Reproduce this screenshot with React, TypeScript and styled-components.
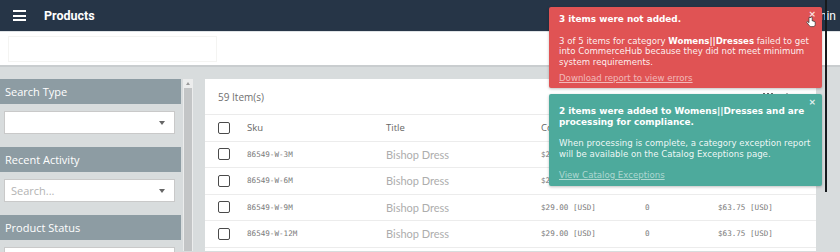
import React from "react";
import styled, { createGlobalStyle, css } from "styled-components";

const Global = createGlobalStyle`
  html, body { margin: 0; padding: 0; }
  body {
    width: 840px; height: 252px; overflow: hidden;
    background: #d8dcdd;
    font-family: "Open Sans", "Liberation Sans", sans-serif;
  }
  * { box-sizing: border-box; }
`;

const Page = styled.div`
  position: relative;
  width: 840px;
  height: 252px;
  overflow: hidden;
  background: #d8dcdd;
`;

const TopBar = styled.header`
  height: 31px;
  background: #263547;
  display: flex;
  align-items: center;
  padding: 0 4px 0 13px;
  border-bottom: 1px solid #dfe3e6;
  box-sizing: content-box;
`;

const Burger = styled.div`
  width: 13px;
  display: flex;
  flex-direction: column;
  gap: 2.5px;
  span { display: block; height: 2px; background: #fff; }
`;

const AppTitle = styled.h1`
  margin: 0 0 0 18px;
  font-family: Roboto, "Liberation Sans", sans-serif;
  font-weight: 700;
  font-size: 12.5px;
  color: #fff;
  flex: 1;
`;

const UserName = styled.span`
  font-family: Roboto, "Liberation Sans", sans-serif;
  font-size: 12px;
  color: #fff;
`;

const SubBar = styled.div`
  height: 35px;
  background: #fff;
  padding: 4px 8px;
  border-bottom: 2px solid #c9cdcf;
`;

const FilterBox = styled.div`
  width: 209px;
  height: 26px;
  border: 1px solid #f4f4f2;
`;

const Content = styled.div`
  display: grid;
  grid-template-columns: 181px 10px 621px;
  column-gap: 2px;
  padding-top: 12px;
  & > :nth-child(3) { margin-left: 10px; }
`;

const Sidebar = styled.aside`
  display: flex;
  flex-direction: column;
`;

const SectionHead = styled.div`
  height: 25px;
  background: #8d9ca3;
  color: #fff;
  font-family: "Open Sans", sans-serif;
  font-size: 11px;
  line-height: 25px;
  padding-left: 5px;
`;

const SelectBox = styled.div`
  height: 23px;
  margin: 7px 6px 13px 4px;
  background: #fff;
  border: 1px solid #c9c9c9;
  display: flex;
  align-items: center;
  padding: 0 9px 0 6px;
  font-family: "Open Sans", sans-serif;
  font-size: 11px;
  color: #b3b3b3;
  span { flex: 1; }
  &::after {
    content: "";
    border-left: 3px solid transparent;
    border-right: 3px solid transparent;
    border-top: 4px solid #666;
  }
`;

const ScrollTrack = styled.div`
  height: 172px;
  background: #eceded;
  display: flex;
  flex-direction: column;
  align-items: center;
`;

const ScrollArrow = styled.div`
  height: 9px;
  display: flex;
  align-items: center;
  &::before {
    content: "";
    border-left: 2.5px solid transparent;
    border-right: 2.5px solid transparent;
    border-bottom: 3px solid #9a9a9a;
  }
`;

const ScrollThumb = styled.div`
  width: 8px;
  flex: 1;
  background: #c3c5c6;
`;

const Card = styled.main`
  background: #fff;
  height: 172px;
`;

const CardTop = styled.div`
  height: 36px;
  display: flex;
  align-items: center;
  padding: 0 13px;
  border-bottom: 1px solid #ebebeb;
  font-family: "Open Sans", sans-serif;
  font-size: 10px;
  color: #707070;
  span { flex: 1; }
`;

const ToolIcons = styled.div`
  display: flex;
  gap: 12px;
  margin-right: 14px;
  align-items: flex-start;
  height: 22px;
`;

const Row = styled.div`
  height: 26.5px;
  display: grid;
  grid-template-columns: 29px 139px 155px 104px 73px 1fr;
  align-items: center;
  padding-left: 13px;
  border-bottom: 1px solid #ececec;
`;

const Check = styled.span`
  width: 12px;
  height: 12px;
  border: 1.6px solid #4a4a4a;
  border-radius: 2px;
`;

const HeadCell = styled.span`
  font-family: "Open Sans", sans-serif;
  font-size: 9.5px;
  color: #666;
  white-space: nowrap;
`;

const Cell = styled.span<{ $mono?: boolean }>`
  white-space: nowrap;
  ${(p) =>
    p.$mono
      ? css`
          font-family: "DejaVu Sans Mono", "Liberation Mono", monospace;
          font-size: 7.6px;
          color: #7a7a7a;
        `
      : css`
          font-family: Lato, "Open Sans", sans-serif;
          font-size: 11px;
          color: #adadad;
        `}
`;

const ToastLayer = styled.div`
  position: absolute;
  top: 0;
  left: 549px;
  width: 278px;
  height: 192px;
  border-right: 2px solid #161a1d;
  padding-top: 7px;
  display: flex;
  flex-direction: column;
  gap: 6px;
`;

const Toast = styled.div<{ $tone: "error" | "success" }>`
  position: relative;
  width: 273px;
  padding: ${(p) => (p.$tone === "error" ? "7px 4px 5px 10px" : "12px 4px 6px 10px")};
  font-family: "DejaVu Sans", "Liberation Sans", sans-serif;
  font-size: 8.6px;
  line-height: 10.5px;
  color: #fff;
  border-radius: 2px;
  background: ${(p) => (p.$tone === "error" ? "#e05354" : "#4daa9c")};
  box-shadow: 0 1px 3px rgba(0, 0, 0, 0.25);
`;

const ToastTitle = styled.div`
  font-weight: 700;
  font-size: 8.9px;
`;

const ToastBody = styled.p`
  margin: 11px 0 0;
  padding-right: 4px;
  color: rgba(255, 255, 255, 0.92);
  b { font-weight: 700; color: #fff; }
`;

const ToastLink = styled.a<{ $tone: "error" | "success" }>`
  display: block;
  margin-top: ${(p) => (p.$tone === "error" ? "5.5px" : "10.5px")};
  text-decoration: underline;
  color: ${(p) => (p.$tone === "error" ? "rgba(255,255,255,0.6)" : "rgba(255,255,255,0.55)")};
`;

const Close = styled.span<{ $top: number }>`
  position: absolute;
  top: ${(p) => p.$top}px;
  right: 6px;
  font-family: "DejaVu Sans", sans-serif;
  font-size: 9px;
  line-height: 9px;
  font-weight: 700;
  color: rgba(255, 255, 255, 0.85);
`;

const Cursor = styled.svg`
  position: absolute;
  top: 9px;
  right: 5px;
`;

const rows = ["86549-W-3M", "86549-W-6M", "86549-W-9M", "86549-W-12M"];

export default function App() {
  return (
    <Page>
      <Global />
      <TopBar>
        <Burger>
          <span />
          <span />
          <span />
        </Burger>
        <AppTitle>Products</AppTitle>
        <UserName>Admin</UserName>
      </TopBar>
      <SubBar>
        <FilterBox />
      </SubBar>
      <Content>
        <Sidebar>
          <SectionHead>Search Type</SectionHead>
          <SelectBox>
            <span />
          </SelectBox>
          <SectionHead>Recent Activity</SectionHead>
          <SelectBox>
            <span>Search...</span>
          </SelectBox>
          <SectionHead>Product Status</SectionHead>
          <SelectBox>
            <span />
          </SelectBox>
        </Sidebar>
        <ScrollTrack>
          <ScrollArrow />
          <ScrollThumb />
        </ScrollTrack>
        <Card>
          <CardTop>
            <span>59 Item(s)</span>
            <ToolIcons>
              <svg width="12" height="10" viewBox="0 0 12 10">
                <rect x="0" y="8" width="12" height="2" fill="#a9b0b5" />
              </svg>
              <svg width="12" height="10" viewBox="0 0 12 10">
                <rect x="0" y="8" width="12" height="2" fill="#9dbbe0" />
              </svg>
              <svg width="10" height="10" viewBox="0 0 10 10" fill="#666">
                <rect x="0" y="7" width="2" height="2" />
                <rect x="4" y="7" width="2" height="2" />
                <rect x="8" y="7" width="2" height="2" />
              </svg>
              <svg width="4" height="10" viewBox="0 0 4 10" fill="#999">
                <circle cx="2" cy="8" r="1" />
              </svg>
            </ToolIcons>
          </CardTop>
          <Row>
            <Check />
            <HeadCell>Sku</HeadCell>
            <HeadCell>Title</HeadCell>
            <HeadCell>Cost</HeadCell>
            <HeadCell>Qty</HeadCell>
            <HeadCell>Price</HeadCell>
          </Row>
          {rows.map((sku) => (
            <Row key={sku}>
              <Check />
              <Cell $mono>{sku}</Cell>
              <Cell>Bishop Dress</Cell>
              <Cell $mono>$29.00 [USD]</Cell>
              <Cell $mono>0</Cell>
              <Cell $mono>$63.75 [USD]</Cell>
            </Row>
          ))}
        </Card>
      </Content>
      <ToastLayer>
        <Toast $tone="error">
          <Close $top={3}>×</Close>
          <Cursor width="12" height="12" viewBox="0 0 12 12">
            <path
              d="M4 1.5v5.2l-1.2-1c-.6-.5-1.4.2-.9.8l2.4 3.2c.5.6 1.1.9 1.9.9h2c1.2 0 2-.9 2-2V6c0-.5-.8-.6-1-.1v-.4c0-.5-.8-.6-1-.1v-.3c0-.5-.8-.6-1-.1V1.5c0-.7-1.2-.7-1.2 0z"
              fill="#fff"
              stroke="#333"
              strokeWidth="0.7"
            />
          </Cursor>
          <ToastTitle>3 items were not added.</ToastTitle>
          <ToastBody>
            3 of 5 items for category <b>Womens||Dresses</b> failed to get into CommerceHub
            because they did not meet minimum system requirements.
          </ToastBody>
          <ToastLink $tone="error">Download report to view errors</ToastLink>
        </Toast>
        <Toast $tone="success">
          <Close $top={4}>×</Close>
          <ToastTitle>2 items were added to Womens||Dresses and are processing for compliance.</ToastTitle>
          <ToastBody>
            When processing is complete, a category exception report will be available on the
            Catalog Exceptions page.
          </ToastBody>
          <ToastLink $tone="success">View Catalog Exceptions</ToastLink>
        </Toast>
      </ToastLayer>
    </Page>
  );
}
